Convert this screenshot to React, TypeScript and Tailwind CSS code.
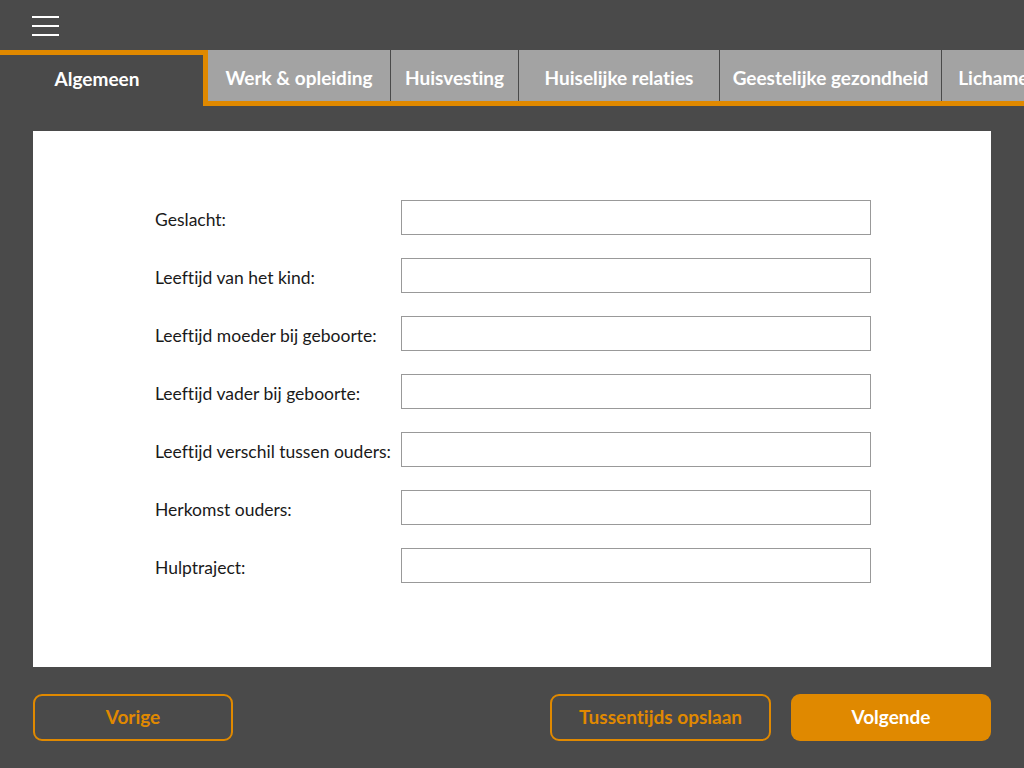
import { useState } from 'react';

const tabs = [
    { label: 'Algemeen', width: 'w-[208px]' },
    { label: 'Werk & opleiding', width: 'w-[182px]' },
    { label: 'Huisvesting', width: 'w-[128px]' },
    { label: 'Huiselijke relaties', width: 'w-[201px]' },
    { label: 'Geestelijke gezondheid', width: 'w-[222px]' },
    { label: 'Lichamelijke gezondheid', width: 'w-[240px]' },
];

const fields = [
    'Geslacht:',
    'Leeftijd van het kind:',
    'Leeftijd moeder bij geboorte:',
    'Leeftijd vader bij geboorte:',
    'Leeftijd verschil tussen ouders:',
    'Herkomst ouders:',
    'Hulptraject:',
];

export default function App() {
    const [active] = useState(0);

    return (
        <div className="w-[1024px] h-[768px] overflow-hidden bg-[#4a4a4a] flex flex-col font-['Lato','Liberation_Sans',sans-serif] [font-variant-ligatures:none]">
            {/* Header */}
            <div className="h-[50px] flex items-start pl-[32px] pt-[16px] shrink-0">
                <button className="flex flex-col gap-[7px]">
                    <span className="block w-[27px] h-[2px] bg-white" />
                    <span className="block w-[27px] h-[2px] bg-white" />
                    <span className="block w-[27px] h-[2px] bg-white" />
                </button>
            </div>

            {/* Tabs */}
            <div className="flex h-[56px] shrink-0 overflow-hidden whitespace-nowrap">
                {tabs.map((tab, i) =>
                    i === active ? (
                        <div
                            key={tab.label}
                            className={`${tab.width} shrink-0 border-t-[5px] border-r-[5px] border-[#e08900] flex items-center justify-center pb-[5px] pr-[9px] text-[19px] leading-none font-bold text-white`}
                        >
                            {tab.label}
                        </div>
                    ) : (
                        <div
                            key={tab.label}
                            className={`${tab.width} shrink-0 border-b-[5px] border-[#e08900] flex`}
                        >
                            <div className={`flex-1 bg-[#a3a3a3] flex items-center justify-center pt-[3px] text-[19px] leading-none font-bold text-white ${i > 1 ? 'border-l border-[#4a4a4a]' : ''}`}>
                                {tab.label}
                            </div>
                        </div>
                    )
                )}
            </div>

            {/* Form panel */}
            <div className="mx-[33px] mt-[25px] h-[536px] bg-white shrink-0 pt-[69px] pl-[122px]">
                <div className="flex flex-col gap-[23px]">
                    {fields.map((f) => (
                        <div key={f} className="flex items-center">
                            <label className="w-[246px] pt-[5px] text-[17.5px] text-[#1a1a1a]">{f}</label>
                            <input className="w-[470px] h-[35px] border border-[#999999] bg-white outline-none px-2" />
                        </div>
                    ))}
                </div>
            </div>

            {/* Footer buttons */}
            <div className="flex items-center px-[33px] mt-[27px]">
                <button className="w-[200px] h-[47px] rounded-[9px] border-2 border-[#e08900] text-[#e08900] text-[19px] font-bold">
                    Vorige
                </button>
                <div className="flex-1" />
                <button className="w-[221px] h-[47px] rounded-[9px] border-2 border-[#e08900] text-[#e08900] text-[19px] font-bold">
                    Tussentijds opslaan
                </button>
                <button className="ml-[20px] w-[200px] h-[47px] rounded-[9px] bg-[#e08900] text-white text-[19px] font-bold">
                    Volgende
                </button>
            </div>
        </div>
    );
}
